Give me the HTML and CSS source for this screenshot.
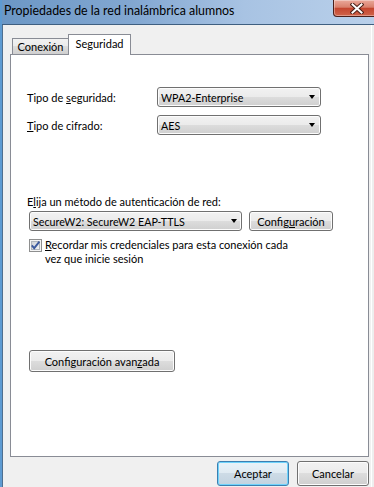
FILE: index.html
```html
<!DOCTYPE html>
<html lang="es">
<head>
    <meta charset="UTF-8">
    <meta name="viewport" content="width=device-width, initial-scale=1.0">
    <title>Propiedades de la red inalámbrica alumnos</title>
    <link rel="stylesheet" href="styles.css">
</head>
<body>
    <div class="window">
        <div class="titlebar">
            <span class="title">Propiedades de la red inalámbrica alumnos</span>
            <div class="close">
                <svg width="14" height="11" viewBox="0 0 14 11">
                    <path d="M2.5 1.5 L11.5 9.5 M11.5 1.5 L2.5 9.5" stroke="#4a2018" stroke-width="4" stroke-linecap="square"/>
                    <path d="M2.5 1.5 L11.5 9.5 M11.5 1.5 L2.5 9.5" stroke="#ffffff" stroke-width="2" stroke-linecap="square"/>
                </svg>
            </div>
        </div>

        <div class="client">
            <div class="tabs">
                <div class="tab">Conexión</div>
                <div class="tab active">Seguridad</div>
            </div>

            <div class="panel">
                <div class="row">
                    <span class="label">Tipo de <u>s</u>eguridad:</span>
                    <div class="combo"><span>WPA2-Enterprise</span><i class="arrow"></i></div>
                </div>
                <div class="row second">
                    <span class="label"><u>T</u>ipo de cifrado:</span>
                    <div class="combo"><span>AES</span><i class="arrow"></i></div>
                </div>

                <div class="method-label">E<u>l</u>ija un método de autenticación de red:</div>
                <div class="method-row">
                    <div class="combo method"><span>SecureW2: SecureW2 EAP-TTLS</span><i class="arrow"></i></div>
                    <button class="btn config">Config<u>u</u>ración</button>
                </div>

                <div class="check-row">
                    <svg class="checkbox" width="13" height="13" viewBox="0 0 13 13">
                        <defs>
                            <linearGradient id="cb" x1="0" y1="0" x2="1" y2="1">
                                <stop offset="0" stop-color="#cbcfd5"/>
                                <stop offset="1" stop-color="#f6f6f6"/>
                            </linearGradient>
                        </defs>
                        <rect x="0.5" y="0.5" width="12" height="12" fill="#f4f4f4" stroke="#8e8f8f"/>
                        <rect x="2.5" y="2.5" width="8" height="8" fill="url(#cb)" stroke="#b0b5bc"/>
                        <path d="M2.8 6.4 L5.2 9.2 L10.4 2.6" fill="none" stroke="#3c5a9e" stroke-width="1.9"/>
                    </svg>
                    <span class="check-text"><u>R</u>ecordar mis credenciales para esta conexión cada<br>vez que inicie sesión</span>
                </div>

                <button class="btn advanced">Configuración avan<u>z</u>ada</button>
            </div>

            <div class="footer">
                <button class="btn default">Aceptar</button>
                <button class="btn">Cancelar</button>
            </div>
        </div>
    </div>
</body>
</html>
```

FILE: styles.css
```css
body {
    margin: 0;
    background-color: #f0f0f0;
    font-family: 'Lato', 'Liberation Sans', sans-serif;
    font-size: 11px;
    color: #000;
}

.window {
    width: 374px;
    height: 487px;
    overflow: hidden;
    display: flex;
    flex-direction: column;
    background-color: #eeeeee;
    border-left: 2px solid #5e9bd2;
    box-sizing: border-box;
}

.titlebar {
    height: 24px;
    flex: none;
    display: flex;
    align-items: flex-start;
    border-bottom: 1px solid #3f5f80;
    background: linear-gradient(to right, #6c97c5 0%, #82a7d1 35%, #a8c3e3 65%, #b9d0ea 100%);
}

.title {
    font-size: 12.4px;
    line-height: 16px;
    padding: 3px 0 0 2px;
    white-space: nowrap;
}

.close {
    margin-left: auto;
    margin-right: -5px;
    width: 46px;
    height: 17px;
    box-sizing: border-box;
    border: 1px solid #4a1f1a;
    border-top: none;
    border-radius: 0 0 0 4px;
    background: linear-gradient(#eaa99b 0%, #d9806c 45%, #c4462f 52%, #d0644a 100%);
    box-shadow: inset 0 0 0 1px rgba(255, 255, 255, 0.35);
    display: flex;
    justify-content: center;
    align-items: center;
    padding-left: 2px;
}

.client {
    flex: 1;
    background-color: #f0f0f0;
    border-left: 1px solid #4f6f8f;
    border-right: 1px solid #ffffff;
    margin-right: 2px;
    padding: 9px 0 0 7px;
}

.tabs {
    display: flex;
    align-items: flex-end;
    height: 20px;
    padding-left: 2px;
}

.tab {
    width: 57px;
    height: 16px;
    box-sizing: border-box;
    border: 1px solid #898c95;
    border-bottom: none;
    background: linear-gradient(#f2f2f2 0%, #ebebeb 50%, #dddddd 50%, #cfcfcf 100%);
    text-align: center;
    line-height: 15px;
}

.tab.active {
    position: relative;
    z-index: 1;
    width: 63px;
    height: 21px;
    margin-left: -1px;
    margin-bottom: -1px;
    background: #ffffff;
    line-height: 18px;
}

.panel {
    width: 359px;
    height: 403px;
    box-sizing: border-box;
    background-color: #ffffff;
    border: 1px solid #898c95;
    padding: 32px 0 0 16px;
}

.row {
    display: flex;
    align-items: center;
    height: 20px;
}

.row.second {
    margin-top: 8px;
}

.label {
    width: 130px;
}

.combo {
    width: 164px;
    height: 20px;
    box-sizing: border-box;
    display: flex;
    align-items: center;
    justify-content: space-between;
    padding: 0 5px 0 3px;
    border: 1px solid #707070;
    border-radius: 3px;
    background: linear-gradient(#f2f2f2 0%, #ebebeb 50%, #dddddd 50%, #cfcfcf 100%);
    box-shadow: inset 0 0 0 1px #fcfcfc;
    font-size: 10.7px;
    white-space: nowrap;
}

.arrow {
    width: 0;
    height: 0;
    border-top: 4px solid #000;
    border-left: 3.5px solid transparent;
    border-right: 3.5px solid transparent;
}

.method-label {
    margin-top: 60px;
    line-height: 14px;
}

.method-row {
    display: flex;
    margin-top: 2px;
    margin-left: 2px;
}

.combo.method {
    width: 213px;
    padding-right: 4px;
}

.btn {
    font: inherit;
    color: #000;
    padding: 0;
    border: 1px solid #707070;
    border-radius: 3px;
    background: linear-gradient(#f2f2f2 0%, #ebebeb 50%, #dddddd 50%, #cfcfcf 100%);
    box-shadow: inset 0 0 0 1px #fcfcfc;
    box-sizing: border-box;
}

.btn.config {
    width: 84px;
    height: 20px;
    margin-left: 7px;
}

.check-row {
    display: flex;
    align-items: flex-start;
    margin-top: 7px;
    margin-left: 2px;
    line-height: 14px;
}

.checkbox {
    flex: none;
    margin-top: 1px;
    margin-right: 3px;
}

.btn.advanced {
    display: block;
    width: 146px;
    height: 22px;
    margin-top: 84px;
    margin-left: 2px;
}

.footer {
    width: 359px;
    display: flex;
    justify-content: flex-end;
    gap: 8px;
    margin-top: 4px;
}

.footer .btn {
    width: 72px;
    height: 25px;
}

.btn.default {
    border-color: #3c7fb1;
    background: linear-gradient(#eaf3f9 0%, #dfeaf2 50%, #cddbe6 50%, #c2d3e0 100%);
    box-shadow: inset 0 0 0 1px #6fd3fb;
}
```
